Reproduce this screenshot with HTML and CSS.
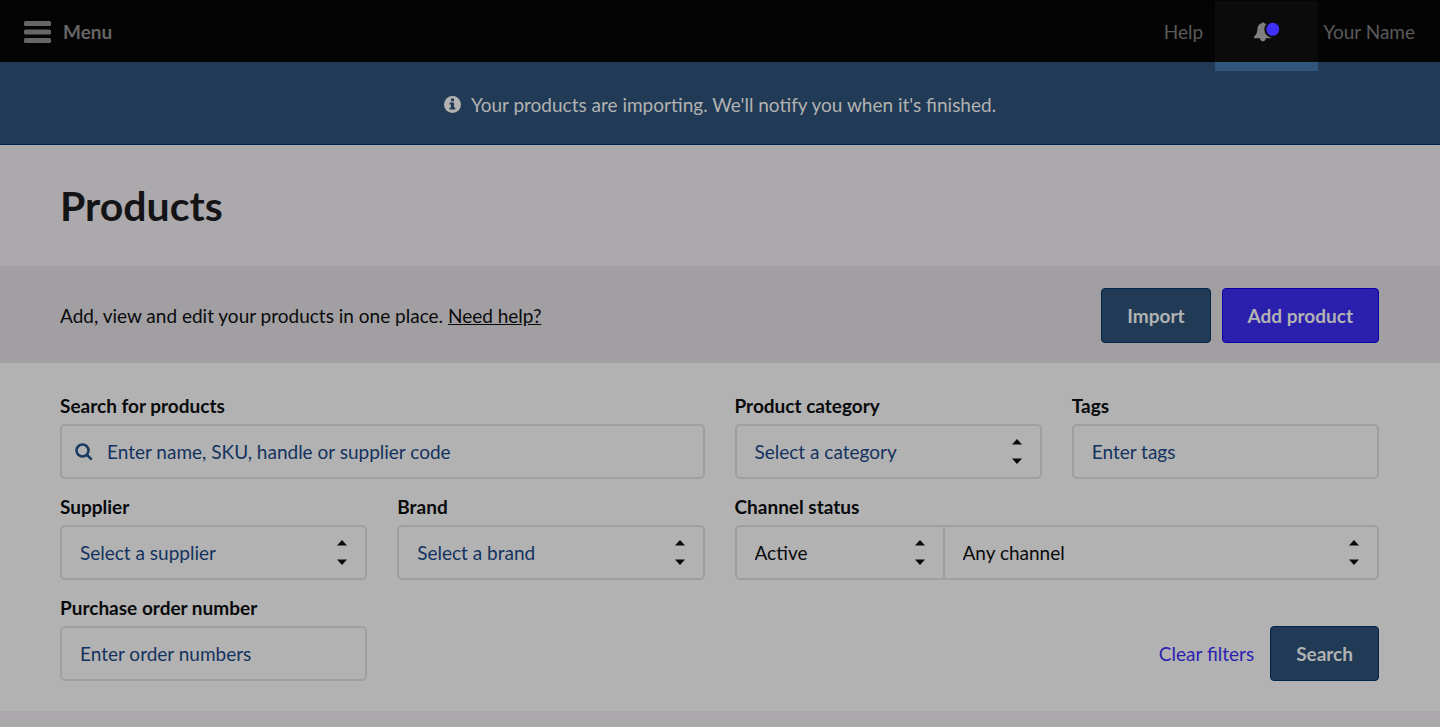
FILE: index.html
```html
<!DOCTYPE html>
<html lang="en">
<head>
    <meta charset="UTF-8">
    <meta name="viewport" content="width=device-width, initial-scale=1">
    <title>Products</title>
    <link rel="stylesheet" href="styles.css">
</head>
<body>

<header class="topbar">
    <button type="button" class="menu-button">
        <svg width="27" height="22" viewBox="0 0 27 22" aria-hidden="true">
            <rect width="27" height="5" rx="1.5"/>
            <rect y="8.5" width="27" height="5" rx="1.5"/>
            <rect y="17" width="27" height="5" rx="1.5"/>
        </svg>
        Menu
    </button>
    <nav class="topbar-nav">
        <a href="#" class="help-link">Help</a>
        <button type="button" class="notifications" aria-label="Notifications">
            <svg width="28" height="24" viewBox="0 0 28 24" aria-hidden="true">
                <path class="bell" d="M9 3.200C9.200 2 10.800 2 11 3.200c3.400.7 4.300 3.300 4.500 6.200.2 3.500.8 5 2.400 6.800.8.9.3 2-.7 2h-4.400c-.2 4.200-5.600 4.200-5.800 0H2c-1 0-1.300-1-.7-1.800C3.600 14 4.100 12.500 4.400 9.400 4.600 6.300 5.600 3.900 9 3.200z"/>
                <circle class="bell-dot" cx="19.800" cy="9.300" r="7.500"/>
            </svg>
        </button>
        <a href="#" class="user-link">Your Name</a>
    </nav>
</header>

<div class="banner" role="status">
    <svg width="17" height="17" viewBox="0 0 17 17" aria-hidden="true">
        <circle class="info-disc" cx="8.500" cy="8.500" r="8.500"/>
        <path class="info-mark" d="M7 2.600h3v2.600H7zM5.600 6.600H10v5h1.300v2H5.600v-2h1.300v-3H5.600z"/>
    </svg>
    <span>Your products are importing. We'll notify you when it's finished.</span>
</div>

<main>
    <div class="page-title">
        <h1>Products</h1>
    </div>

    <div class="toolbar">
        <p>Add, view and edit your products in one place. <a href="#">Need help?</a></p>
        <div class="toolbar-buttons">
            <button type="button" class="btn">Import</button>
            <button type="button" class="btn btn-primary">Add product</button>
        </div>
    </div>

    <form class="filters">
        <div class="field field-wide">
            <label for="search">Search for products</label>
            <div class="control">
                <svg class="search-icon" width="18" height="18" viewBox="0 0 18 18" aria-hidden="true">
                    <circle cx="7.500" cy="7.500" r="6"/>
                    <path d="M12 12l4.700 4.700"/>
                </svg>
                <input type="text" id="search" class="has-icon" placeholder="Enter name, SKU, handle or supplier code">
            </div>
        </div>

        <div class="field">
            <label for="category">Product category</label>
            <div class="control">
                <select id="category" class="empty"><option>Select a category</option></select>
                <svg class="arrows" width="10" height="25" viewBox="0 0 10 25" aria-hidden="true"><path d="M0 5.500L5 0l5 5.500zM0 19.500h10L5 25z"/></svg>
            </div>
        </div>

        <div class="field">
            <label for="tags">Tags</label>
            <input type="text" id="tags" placeholder="Enter tags">
        </div>

        <div class="field">
            <label for="supplier">Supplier</label>
            <div class="control">
                <select id="supplier" class="empty"><option>Select a supplier</option></select>
                <svg class="arrows" width="10" height="25" viewBox="0 0 10 25" aria-hidden="true"><path d="M0 5.500L5 0l5 5.500zM0 19.500h10L5 25z"/></svg>
            </div>
        </div>

        <div class="field">
            <label for="brand">Brand</label>
            <div class="control">
                <select id="brand" class="empty"><option>Select a brand</option></select>
                <svg class="arrows" width="10" height="25" viewBox="0 0 10 25" aria-hidden="true"><path d="M0 5.500L5 0l5 5.500zM0 19.500h10L5 25z"/></svg>
            </div>
        </div>

        <div class="field field-wide">
            <label for="status">Channel status</label>
            <div class="joined">
                <div class="control">
                    <select id="status"><option>Active</option><option>Inactive</option></select>
                    <svg class="arrows" width="10" height="25" viewBox="0 0 10 25" aria-hidden="true"><path d="M0 5.500L5 0l5 5.500zM0 19.500h10L5 25z"/></svg>
                </div>
                <div class="control">
                    <select id="channel" aria-label="Channel"><option>Any channel</option></select>
                    <svg class="arrows" width="10" height="25" viewBox="0 0 10 25" aria-hidden="true"><path d="M0 5.500L5 0l5 5.500zM0 19.500h10L5 25z"/></svg>
                </div>
            </div>
        </div>

        <div class="field">
            <label for="order_number">Purchase order number</label>
            <input type="text" id="order_number" placeholder="Enter order numbers">
        </div>

        <div class="filter-actions">
            <a href="#">Clear filters</a>
            <button type="button" class="btn">Search</button>
        </div>
    </form>
</main>

</body>
</html>
```
FILE: styles.css
```css
* {
    box-sizing: border-box;
}

body {
    margin: 0;
    background: #aba9ac;
    color: #090a0c;
    font-family: Lato, sans-serif;
    font-size: 19px;
    line-height: 24px;
}

button,
input,
select {
    font: inherit;
}

button {
    cursor: pointer;
}

/* Top bar */
.topbar {
    display: flex;
    justify-content: space-between;
    height: 62px;
    padding: 1px 25px 0 24px;
    background: #040404;
}

.menu-button {
    display: flex;
    align-items: center;
    gap: 12px;
    padding: 0;
    border: none;
    background: none;
    color: #666;
    font-weight: 700;
}

.menu-button svg {
    fill: #666;
}

.topbar-nav {
    display: flex;
    align-items: center;
}

.topbar-nav a {
    color: #5a5a5a;
    text-decoration: none;
}

.notifications {
    position: relative;
    display: flex;
    align-items: center;
    justify-content: center;
    align-self: stretch;
    width: 103px;
    margin: 0 5px 0 12px;
    padding: 0;
    border: none;
    background: #0b0b0b;
}

.notifications::after {
    content: "";
    position: absolute;
    top: 100%;
    left: 0;
    right: 0;
    height: 9px;
    background: #30557b;
}

.bell {
    fill: #7f7f7f;
}

.bell-dot {
    fill: #4030f5;
    stroke: #0b0b0b;
    stroke-width: 2px;
}

/* Import banner */
.banner {
    display: flex;
    align-items: center;
    justify-content: center;
    gap: 10px;
    height: 83px;
    padding-top: 3px;
    background: #213b56;
    border-bottom: 1px solid #00214e;
    color: #b2b2b2;
}

.info-disc {
    fill: #b2b2b2;
}

.info-mark {
    fill: #213b56;
}

/* Title and toolbar */
.page-title {
    padding: 37px 60px 36px;
}

h1 {
    margin: 0;
    color: #141416;
    font-size: 41px;
    line-height: 48px;
    font-weight: 700;
}

.toolbar {
    display: flex;
    align-items: center;
    justify-content: space-between;
    padding: 22px 61px 20px 60px;
    background: #a19fa2;
}

.toolbar p {
    margin: 0;
}

.toolbar a {
    color: inherit;
}

.toolbar-buttons {
    display: flex;
    gap: 11px;
}

.btn {
    height: 55px;
    padding: 0 25px;
    border: 1px solid #00264b;
    border-radius: 4px;
    background: #213b56;
    color: #b2b2b2;
    font-weight: 700;
}

.btn-primary {
    border-color: #0b00a8;
    background: #2b20ae;
}

/* Filters */
.filters {
    display: grid;
    grid-template-columns: repeat(4, 1fr);
    gap: 16px 30px;
    padding: 31px 61px 30px 60px;
    background: #b2b2b2;
}

.field-wide {
    grid-column: span 2;
}

.field label {
    display: block;
    margin-bottom: 6px;
    font-weight: 700;
}

.control {
    position: relative;
}

input,
select {
    display: block;
    width: 100%;
    height: 55px;
    padding: 0 18px;
    border: 2px solid #9f9fa1;
    border-radius: 5px;
    background: none;
    color: #090a0c;
    appearance: none;
}

input::placeholder {
    color: #14325f;
    opacity: 1;
}

.empty {
    color: #14325f;
}

.has-icon {
    padding-left: 45px;
}

.search-icon {
    position: absolute;
    top: 19px;
    left: 15px;
    fill: none;
    stroke: #173a60;
    stroke-width: 2.5px;
}

.arrows {
    position: absolute;
    top: 15px;
    right: 20px;
    fill: #090a0c;
    pointer-events: none;
}

/* Two selects sharing one border */
.joined {
    display: grid;
    grid-template-columns: 210px 1fr;
}

.joined .control:first-child select {
    border-radius: 5px 0 0 5px;
}

.joined .control:last-child {
    margin-left: -2px;
}

.joined .control:last-child select {
    border-radius: 0 5px 5px 0;
}

.filter-actions {
    grid-column: 3 / -1;
    display: flex;
    align-items: center;
    justify-content: flex-end;
    gap: 16px;
    align-self: end;
}

.filter-actions a {
    color: #2b1fb0;
    text-decoration: none;
}
```
